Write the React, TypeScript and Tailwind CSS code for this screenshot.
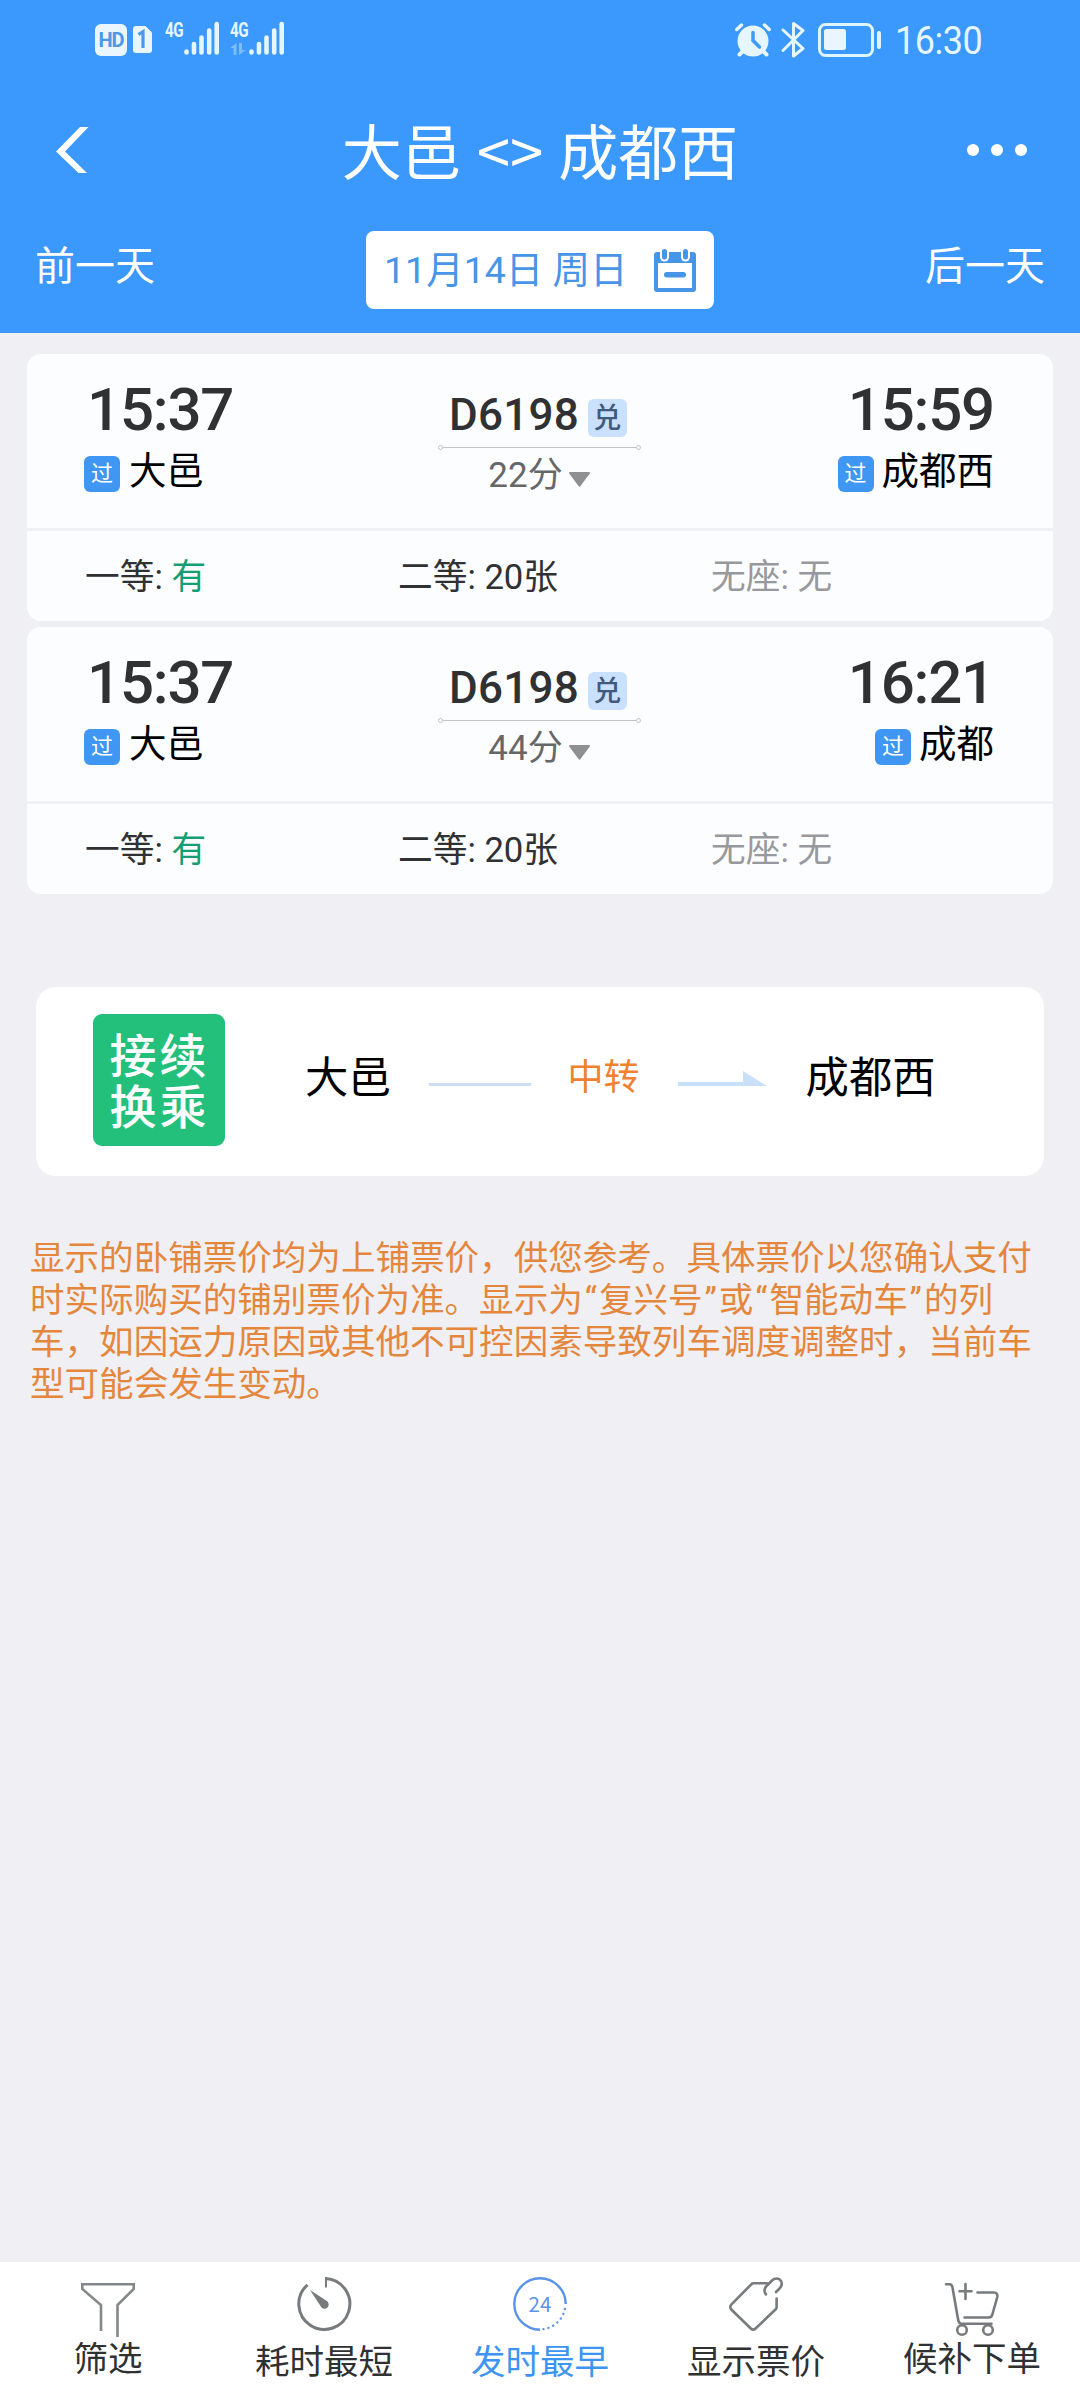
import React from "react";

type Train = {
  depart: string;
  arrive: string;
  from: string;
  to: string;
  duration: string;
};

const trains: Train[] = [
  { depart: "15:37", arrive: "15:59", from: "大邑", to: "成都西", duration: "22分" },
  { depart: "15:37", arrive: "16:21", from: "大邑", to: "成都", duration: "44分" },
];

const notice = [
  "显示的卧铺票价均为上铺票价，供您参考。具体票价以您确认支付",
  "时实际购买的铺别票价为准。显示为“复兴号”或“智能动车”的列",
  "车，如因运力原因或其他不可控因素导致列车调度调整时，当前车",
  "型可能会发生变动。",
];

function SignalBars() {
  return (
    <svg width="36" height="34" viewBox="0 0 36 34" stroke="#e4f6ff" strokeWidth="4.6" strokeLinecap="round">
      <path d="M2.500 30.500v1M10 23v8.500M17.500 16.500v15M25.200 9.500v22M32.700 3v28.500" />
    </svg>
  );
}

function StatusBar() {
  return (
    <div className="flex h-[78px] items-start justify-between pl-[95px] pr-[97px] pt-[21px] text-[#e6f6ff]">
      <div className="flex items-start">
        <div className="mt-[3px] flex h-8 w-8 items-center justify-center rounded-[6px] bg-[#e9f6ff] text-[20px] font-bold leading-none tracking-[-1px] text-[#4a9ae8]">
          HD
        </div>
        <svg className="ml-[6px] mt-[5px]" width="19" height="27" viewBox="0 0 19 27">
          <path d="M3 0h9.500l6.500 6.500V24a3 3 0 0 1-3 3H3a3 3 0 0 1-3-3V3a3 3 0 0 1 3-3z" fill="#e9f6ff" />
          <path d="M5.500 8.500 10 5.700V22" fill="none" stroke="#4a9ae8" strokeWidth="3.200" />
        </svg>
        <div className="ml-[13px] flex">
          <span className="w-[19px] origin-left text-[20px] font-bold leading-[18px] tracking-[-0.500px] [transform:scaleX(0.76)]">4G</span>
          <SignalBars />
        </div>
        <div className="ml-[10px] flex">
          <div className="w-[19px]">
            <span className="block origin-left text-[20px] font-bold leading-[18px] tracking-[-0.500px] [transform:scaleX(0.76)]">4G</span>
            <svg className="mt-[4px]" width="17" height="12" viewBox="0 0 17 12" fill="#7bbcfb">
              <path d="M6.500 0v12H3.500V5H0zM9 0h3v7h4l-7 5z" />
            </svg>
          </div>
          <SignalBars />
        </div>
      </div>
      <div className="flex items-start">
        <svg className="mt-[2px]" width="36" height="34" viewBox="0 0 36 34" fill="none" strokeLinecap="round">
          <path d="M9 27 4.500 31.500M27 27l4.500 4.500" stroke="#e6f6ff" strokeWidth="4" />
          <circle cx="18" cy="18" r="15.500" fill="#e6f6ff" />
          <path d="M1.800 6.500 6.500 2M34.200 6.500 29.500 2" stroke="#e6f6ff" strokeWidth="3.500" />
          <path d="M18 9.500v8l6.500 6.500" stroke="#3f9afa" strokeWidth="3.500" />
        </svg>
        <svg className="ml-[10px]" width="25" height="37" viewBox="0 0 25 37" fill="none" stroke="#e6f6ff" strokeWidth="3" strokeLinejoin="round" strokeLinecap="round">
          <path d="M2 9 22 27.500 12.500 35V2.500L22 9.500 2 29.500" />
        </svg>
        <svg className="ml-[12px] mt-[2px]" width="64" height="34" viewBox="0 0 64 34">
          <rect x="1.500" y="1.500" width="53" height="31" rx="6" fill="none" stroke="#dcf5ff" strokeWidth="3" />
          <rect x="6" y="6" width="22" height="21" rx="2.500" fill="#e9f5ff" />
          <rect x="59" y="8" width="4" height="18" rx="2" fill="#dcf5ff" />
        </svg>
        <span className="ml-[13px] mt-[1px] w-[88px] origin-left whitespace-nowrap text-[38.500px] leading-[38px] tracking-[-0.500px] [transform:scaleX(0.935)]">
          16:30
        </span>
      </div>
    </div>
  );
}

function CalendarIcon() {
  return (
    <svg width="42" height="43" viewBox="0 0 42 43">
      <path fillRule="evenodd" d="M3 3h36a3 3 0 0 1 3 3v34a3 3 0 0 1-3 3H3a3 3 0 0 1-3-3V6a3 3 0 0 1 3-3zM4 14v25h34V14z" fill="#4795e6" />
      <rect x="6" y="-4" width="9" height="16.500" rx="4.500" fill="#fff" />
      <rect x="27" y="-4" width="9" height="16.500" rx="4.500" fill="#fff" />
      <rect x="8" y="0" width="5" height="10.500" rx="2.500" fill="#4795e6" />
      <rect x="29" y="0" width="5" height="10.500" rx="2.500" fill="#4795e6" />
      <rect x="10" y="23" width="22" height="5.500" rx="2.700" fill="#4795e6" />
    </svg>
  );
}

function Header() {
  return (
    <header className="h-[333px] bg-[#3b98fc] text-white">
      <StatusBar />
      <div className="grid h-[148px] grid-cols-[200px_1fr_200px] items-center">
        <svg className="-mt-[4px] ml-[56px]" width="33" height="46" viewBox="0 0 33 46">
          <path d="M24 0h8.500L9 24.500 31 46h-8.500L0 24.500z" fill="#fff" />
        </svg>
        <h1 className="whitespace-nowrap text-center text-[60px] leading-[72px]">
          大邑 <span className="font-['Noto_Sans_CJK_SC']">&lt;&gt;</span> 成都西
        </h1>
        <div className="-mt-[4px] flex gap-[12px] justify-self-end pr-[53px]">
          <i className="size-3 rounded-full bg-white" />
          <i className="size-3 rounded-full bg-white" />
          <i className="size-3 rounded-full bg-white" />
        </div>
      </div>
      <div className="flex items-start justify-between px-[35px] pt-[5px] text-[40px] leading-[78px]">
        <span className="-mt-[3px]">前一天</span>
        <div className="flex h-[78px] w-[348px] items-center justify-between rounded-lg bg-white pl-[18px] pr-[18px] text-[37.500px] text-[#4795e6]">
          <span className="whitespace-nowrap">11月14日 周日</span>
          <CalendarIcon />
        </div>
        <span className="-mt-[3px]">后一天</span>
      </div>
    </header>
  );
}

function PassBadge() {
  return (
    <span className="mt-[4px] flex size-9 items-center justify-center rounded-[6px] bg-[#4097f3] text-[22px] leading-none text-white">
      过
    </span>
  );
}

function TrainCard({ train }: { train: Train }) {
  return (
    <section className="h-[267px] rounded-[14px] bg-[#fcfdff] text-[#303133]">
      <div className="grid h-[174px] grid-cols-[1fr_203px_1fr] pl-[57px] pr-[59px] pt-[28px]">
        <div>
          <div className="pl-[3px] text-[60px] font-medium leading-[56px] tracking-[-1.200px]">{train.depart}</div>
          <div className="mt-[14px] flex gap-[9px] text-[37.500px] leading-[38px] text-black">
            <PassBadge />
            <span>{train.from}</span>
          </div>
        </div>
        <div className="pt-[8px]">
          <div className="flex h-[55px] items-start justify-center gap-[9px] pr-[2px]">
            <span className="text-[44px] font-medium leading-[50px] tracking-[0.200px]">D6198</span>
            <span className="mt-[9px] flex h-[38px] w-[39px] items-center justify-center rounded-[6px] bg-[#cae1fe] pt-[2px] text-[28px] font-medium leading-none text-[#415a7d]">
              兑
            </span>
          </div>
          <div className="flex items-center">
            <i className="size-[5px] rounded-full border border-[#c2c4c7]" />
            <i className="h-px flex-1 bg-[#c2c4c7]" />
            <i className="size-[5px] rounded-full border border-[#c2c4c7]" />
          </div>
          <div className="mt-[5px] flex items-center justify-center gap-[6px] text-[35px] leading-[42px] text-[#666769]">
            <span>{train.duration}</span>
            <svg className="mt-[6px]" width="21" height="15" viewBox="0 0 21 15">
              <path d="M1 0h19c1 0 1.300 1 .6 1.700L11.500 14c-.6.900-1.400.9-2 0L.4 1.700C-.3 1 0 0 1 0z" fill="#8f9092" />
            </svg>
          </div>
        </div>
        <div className="flex flex-col items-end">
          <div className="text-[60px] font-medium leading-[56px] tracking-[-1.200px]">{train.arrive}</div>
          <div className="mt-[14px] flex gap-[8px] text-[37.500px] leading-[38px] text-black">
            <PassBadge />
            <span>{train.to}</span>
          </div>
        </div>
      </div>
      <div className="grid h-[93px] grid-cols-[313px_313px_1fr] items-center border-t-[3px] border-[#f0f1f4] pl-[58px] pt-[2px] text-[34.700px] leading-[40px]">
        <span>一等: <span className="text-[#149e74]">有</span></span>
        <span>二等: 20张</span>
        <span className="text-[#97999c]">无座: 无</span>
      </div>
    </section>
  );
}

function TransferCard() {
  return (
    <section className="mx-[36px] mt-[93px] flex h-[189px] items-center rounded-[20px] bg-white pl-[57px] text-black">
      <div className="-mt-[3px] flex h-[132px] w-[132px] flex-col items-center justify-center rounded-[9px] bg-[#22c07b] pt-[3px] text-[47px] font-medium leading-[51px] tracking-[3px] text-white">
        <span className="pl-[1px]">接续</span>
        <span className="pl-[1px]">换乘</span>
      </div>
      <span className="-mt-[6px] ml-[80px] text-[43.300px] leading-[50px]">大邑</span>
      <i className="ml-[37px] mt-[6px] h-[3px] w-[102px] bg-[#cbdcf4]" />
      <span className="-mt-[7px] ml-[37px] text-[36px] leading-[50px] text-[#ef8130]">中转</span>
      <svg className="-mt-[6px] ml-[38px]" width="89" height="15" viewBox="0 0 89 15">
        <path d="M0 11h65V0l24 15H0z" fill="#c9e0fa" />
      </svg>
      <span className="-mt-[6px] ml-[39px] text-[43.300px] leading-[50px]">成都西</span>
    </section>
  );
}

/* Curly quotes get extra width so each pair sits loosely around its term. */
function NoticeLine({ line }: { line: string }) {
  return (
    <p>
      {line.split(/([“”])/).map((part, i) =>
        part === "“" || part === "”" ? (
          <span key={i} className="inline-block w-[16.200px] text-center">{part}</span>
        ) : (
          part
        ),
      )}
    </p>
  );
}

const iconProps = {
  width: 54,
  height: 54,
  viewBox: "0 0 54 54",
  fill: "none",
  stroke: "#777b7e",
  strokeWidth: 2.6,
  overflow: "visible",
} as const;

function FunnelIcon() {
  return (
    <svg {...iconProps} stroke="#85888a">
      <path d="M20 48V22L1.300 6V1.300h51.400V6L36.500 22v32" />
    </svg>
  );
}

function StopwatchIcon() {
  return (
    <svg {...iconProps}>
      <path d="M28.500 1.500A25.500 25.500 0 1 1 10.500 7.800" strokeWidth="3" />
      <path d="M29 0v10.500" strokeWidth="2" />
      <path d="M13 13 29.500 23.800a4.200 4.200 0 1 1-5.700 5.700z" fill="#777b7e" stroke="none" />
    </svg>
  );
}

function EarliestIcon() {
  return (
    <svg {...iconProps} stroke="#5a94ea">
      <path d="M52.700 27A25.700 25.700 0 1 0 27 52.700" strokeWidth="2.400" />
      <path d="M51.900 32A25.700 25.700 0 0 1 30 52.200" strokeWidth="2.400" strokeLinecap="round" strokeDasharray="0.100 5.100" />
      <text x="27" y="34.800" textAnchor="middle" fontSize="20.5" fontFamily="Noto Sans CJK SC" fill="#5a94ea" stroke="none">24</text>
    </svg>
  );
}

function TagIcon() {
  return (
    <svg {...iconProps} strokeLinecap="round">
      <path d="M38 6.300H24.500a3 3 0 0 0-2.200 1L2.300 27.500a4 4 0 0 0 0 5l19.500 19a3.500 3.500 0 0 0 4.800 0L47 32a2 2 0 0 0 .6-1.500V21.500" />
      <path d="M37 17.500C34.800 14.500 35 12 37 9.700L43 3.500C46 .7 50 .7 52 4c1.500 3 .5 5.500-1.500 7.500L47 15" />
    </svg>
  );
}

function CartIcon() {
  return (
    <svg {...iconProps} strokeLinecap="round" strokeLinejoin="round">
      <path d="M1 1.300h3.500Q7 1.500 7.500 4.500L13 36q.8 4.500 3 4.800h30.500" />
      <path d="M14.500 8.300h12M20.500 1v15" />
      <path d="M32.500 9.500H49q4 .2 3.300 4.500L47.500 31q-.8 3.500-3.500 3.500H19.500" />
      <circle cx="17" cy="47" r="4.800" />
      <circle cx="43" cy="47" r="4.800" />
    </svg>
  );
}

const tabs = [
  { label: "筛选", icon: <FunnelIcon />, layout: "pt-[21px]", text: "mt-0" },
  { label: "耗时最短", icon: <StopwatchIcon />, layout: "pt-[15px]", text: "mt-[9px]" },
  { label: "发时最早", icon: <EarliestIcon />, layout: "pt-[15px] text-[#3d94f3]", text: "mt-[9px]" },
  { label: "显示票价", icon: <TagIcon />, layout: "pt-[15px]", text: "mt-[9px]" },
  { label: "候补下单", icon: <CartIcon />, layout: "pt-[21px]", text: "mt-0" },
];

function TabBar() {
  return (
    <nav className="grid h-[138px] grid-cols-5 bg-white text-[34.500px] leading-[44px] text-[#303133]">
      {tabs.map((tab) => (
        <div key={tab.label} className={`flex flex-col items-center ${tab.layout}`}>
          {tab.icon}
          <span className={tab.text}>{tab.label}</span>
        </div>
      ))}
    </nav>
  );
}

export default function App() {
  return (
    <div className="flex h-[2400px] w-[1080px] flex-col overflow-hidden bg-[#efeff4] font-[Roboto,'Noto_Sans_CJK_SC',sans-serif]">
      <Header />
      <main className="flex-1">
        <div className="flex flex-col gap-[6px] px-[27px] pt-[21px]">
          {trains.map((train) => (
            <TrainCard key={train.arrive} train={train} />
          ))}
        </div>
        <TransferCard />
        <div className="mt-[61px] whitespace-nowrap pl-[30px] text-[34.550px] leading-[42px] text-[#e4873c]">
          {notice.map((line) => (
            <NoticeLine key={line} line={line} />
          ))}
        </div>
      </main>
      <TabBar />
    </div>
  );
}
